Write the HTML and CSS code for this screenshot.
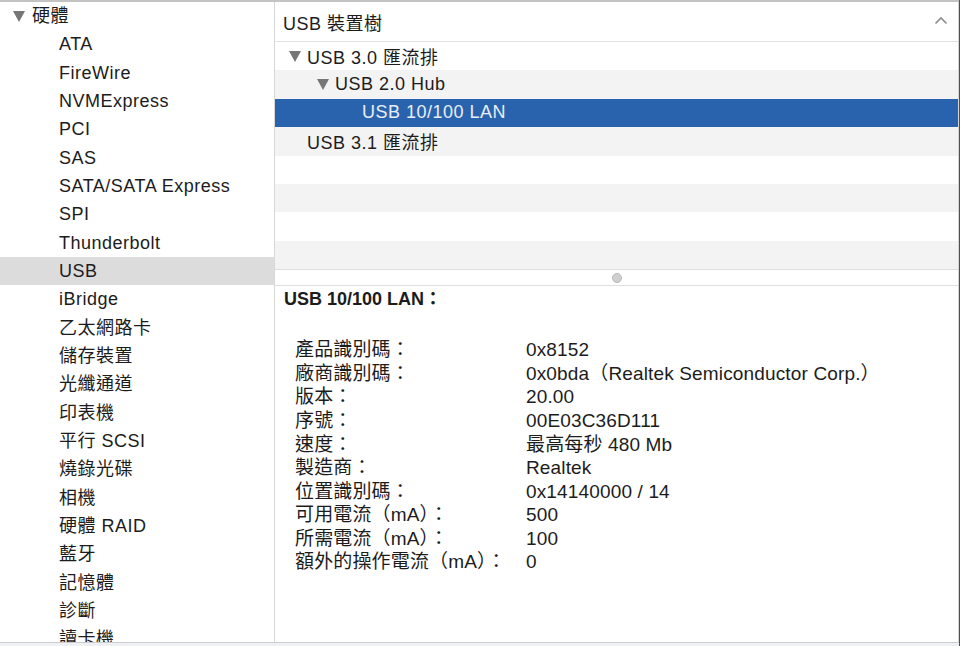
FILE: index.html
```html
<!DOCTYPE html>
<html lang="zh-Hant">
<head>
<meta charset="utf-8">
<title>系統資訊</title>
<link rel="stylesheet" href="styles.css">
</head>
<body>
<div class="window">
  <div class="top-bar"></div>
  <div class="main">
    <nav class="sidebar">
      <div class="side-row group"><span class="tri"></span><span>硬體</span></div>
      <div class="side-row">ATA</div>
      <div class="side-row">FireWire</div>
      <div class="side-row">NVMExpress</div>
      <div class="side-row">PCI</div>
      <div class="side-row">SAS</div>
      <div class="side-row">SATA/SATA Express</div>
      <div class="side-row">SPI</div>
      <div class="side-row">Thunderbolt</div>
      <div class="side-row active">USB</div>
      <div class="side-row">iBridge</div>
      <div class="side-row">乙太網路卡</div>
      <div class="side-row">儲存裝置</div>
      <div class="side-row">光纖通道</div>
      <div class="side-row">印表機</div>
      <div class="side-row">平行 SCSI</div>
      <div class="side-row">燒錄光碟</div>
      <div class="side-row">相機</div>
      <div class="side-row">硬體 RAID</div>
      <div class="side-row">藍牙</div>
      <div class="side-row">記憶體</div>
      <div class="side-row">診斷</div>
      <div class="side-row">讀卡機</div>
    </nav>
    <section class="content">
      <header class="tree-header">
        <span>USB 裝置樹</span>
        <svg class="chevron" width="14" height="9" viewBox="0 0 14 9"><polyline points="1.5,7.5 7,2 12.5,7.5" fill="none" stroke="#8c8c8c" stroke-width="1.6"/></svg>
      </header>
      <div class="tree">
        <div class="tree-row lvl0"><span class="tri"></span><span>USB 3.0 匯流排</span></div>
        <div class="tree-row alt lvl1"><span class="tri"></span><span>USB 2.0 Hub</span></div>
        <div class="tree-row selected lvl2"><span>USB 10/100 LAN</span></div>
        <div class="tree-row alt lvl0b"><span>USB 3.1 匯流排</span></div>
        <div class="tree-row"></div>
        <div class="tree-row alt"></div>
        <div class="tree-row"></div>
        <div class="tree-row alt"></div>
      </div>
      <div class="splitter"><span class="handle"></span></div>
      <div class="details">
        <h2 class="details-title">USB 10/100 LAN：</h2>
        <dl class="props">
          <dt>產品識別碼：</dt><dd>0x8152</dd>
          <dt>廠商識別碼：</dt><dd>0x0bda（Realtek Semiconductor Corp.）</dd>
          <dt>版本：</dt><dd>20.00</dd>
          <dt>序號：</dt><dd>00E03C36D111</dd>
          <dt>速度：</dt><dd>最高每秒 480 Mb</dd>
          <dt>製造商：</dt><dd>Realtek</dd>
          <dt>位置識別碼：</dt><dd>0x14140000 / 14</dd>
          <dt>可用電流（mA）：</dt><dd>500</dd>
          <dt>所需電流（mA）：</dt><dd>100</dd>
          <dt>額外的操作電流（mA）：</dt><dd>0</dd>
        </dl>
      </div>
    </section>
  </div>
  <div class="bottom-bar"></div>
</div>
</body>
</html>
```
FILE: styles.css
```css
* { box-sizing: border-box; }
html, body {
  margin: 0;
  padding: 0;
  background: #ffffff;
}
body {
  width: 960px;
  height: 646px;
  overflow: hidden;
  font-family: "Liberation Sans", "Noto Sans CJK TC", sans-serif;
  font-size: 18px;
  color: #1c1c1c;
}
.window {
  display: flex;
  flex-direction: column;
  width: 960px;
  height: 646px;
  border-right: 1px solid #5d4a4f;
}
.top-bar {
  height: 2px;
  background: #c3c3c3;
  flex: none;
}
.main {
  flex: 1;
  display: flex;
  min-height: 0;
}
.bottom-bar {
  height: 4px;
  flex: none;
  border-top: 1px solid #cdcdcd;
  background: #eef0f4;
}

/* sidebar */
.sidebar {
  width: 275px;
  flex: none;
  border-right: 1px solid #d8d8d8;
  overflow: hidden;
  letter-spacing: 0.5px;
}
.side-row {
  height: 28.33px;
  line-height: 28.33px;
  padding-left: 59px;
  white-space: nowrap;
}
.side-row.group {
  padding-left: 13px;
  display: flex;
  align-items: center;
}
.side-row.active {
  background: #dcdcdc;
}
.tri {
  display: inline-block;
  width: 0;
  height: 0;
  border-left: 6px solid transparent;
  border-right: 6px solid transparent;
  border-top: 11px solid #767676;
  margin-right: 7px;
  flex: none;
}

/* content */
.content {
  flex: 1;
  display: flex;
  flex-direction: column;
  border-right: 1px solid #d4d4d4;
  min-width: 0;
}
.tree-header {
  height: 40px;
  flex: none;
  display: flex;
  align-items: center;
  justify-content: space-between;
  padding: 0 10px 0 8px;
  border-bottom: 1px solid #e2e2e2;
  letter-spacing: 0.5px;
}
.chevron { margin-top: -2px; }
.tree {
  flex: none;
  letter-spacing: 0.5px;
}
.tree-row {
  height: 28.4px;
  display: flex;
  align-items: center;
  white-space: nowrap;
}
.tree-row.alt { background: #f3f3f3; }
.tree-row.selected {
  background: #2963ad;
  color: #e9eef7;
}
.tree-row .tri { margin-right: 6px; }
.lvl0 { padding-left: 14px; }
.lvl1 { padding-left: 42px; }
.lvl2 { padding-left: 87px; }
.lvl0b { padding-left: 32px; }
.splitter {
  height: 17px;
  flex: none;
  border-top: 1px solid #dedede;
  border-bottom: 1px solid #dedede;
  display: flex;
  align-items: center;
  justify-content: center;
}
.handle {
  width: 10px;
  height: 10px;
  border-radius: 50%;
  background: #cfcfcf;
  border: 1px solid #b9b9b9;
}
.details {
  flex: 1;
  padding: 1px 0 0 9px;
}
.details-title {
  margin: 0;
  font-size: 18px;
  font-weight: bold;
  line-height: 24px;
  height: 24px;
}
.props {
  margin: 27px 0 0 11px;
  display: grid;
  grid-template-columns: 231px 1fr;
  font-size: 19px;
  line-height: 23.6px;
  letter-spacing: 0.15px;
}
.props dt, .props dd {
  margin: 0;
  white-space: nowrap;
}
```
